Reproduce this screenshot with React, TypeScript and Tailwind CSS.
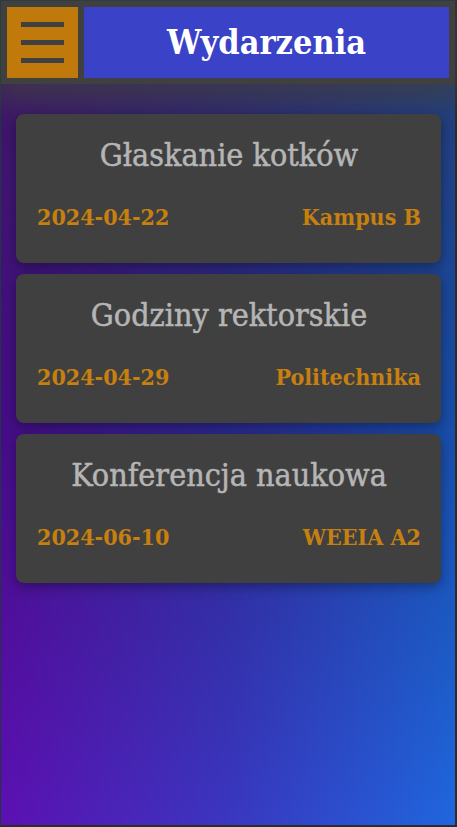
import React from "react";

const events = [
  { title: "Głaskanie kotków", date: "2024-04-22", place: "Kampus B" },
  { title: "Godziny rektorskie", date: "2024-04-29", place: "Politechnika" },
  { title: "Konferencja naukowa", date: "2024-06-10", place: "WEEIA A2" },
];

const slab = "font-['DejaVu_Serif_Condensed','DejaVu_Serif',serif]";

function EventCard({ title, date, place }: { title: string; date: string; place: string }) {
  return (
    <div className="h-[149px] rounded-lg bg-[#404040] pt-[17px] pl-[21px] pr-[20px] shadow-[0_4px_12px_rgba(0,0,0,0.35)]">
      <h2 className="text-center text-[32px] leading-[48px] text-[#b5b5b5] [-webkit-text-stroke:0.5px_#b5b5b5]">
        {title}
      </h2>
      <div className="mt-[22px] flex items-center justify-between text-[23px] leading-[32px] font-semibold text-[#c7800f]">
        <span>{date}</span>
        <span>{place}</span>
      </div>
    </div>
  );
}

export default function App() {
  return (
    <div
      className={`${slab} min-h-[827px] border-l border-r-2 border-t border-b-2 border-l-[#1d3a3c] border-r-[#2c2c2c] border-t-[#243a44] border-b-[#2c2c2c] bg-[linear-gradient(to_bottom,rgba(40,32,48,0.62)_0%,rgba(0,0,0,0.25)_50%,rgba(0,0,0,0)_100%),linear-gradient(to_right,#5c10b2,#3a36c0_50%,#1f66de)]`}
    >
      <header className="flex gap-[6px] bg-[#404040] p-[6px] shadow-[0_6px_30px_10px_rgba(64,64,64,0.75)]">
        <button className="flex h-[71px] w-[71px] shrink-0 flex-col items-center justify-center gap-[13px] bg-[#c07a0c]">
          <span className="block h-[5px] w-[43px] bg-[#404040]" />
          <span className="block h-[5px] w-[43px] bg-[#404040]" />
          <span className="block h-[5px] w-[43px] bg-[#404040]" />
        </button>
        <div className="flex h-[71px] flex-1 items-center justify-center bg-[#3a42c8]">
          <h1 className="text-[34px] font-bold text-white">Wydarzenia</h1>
        </div>
      </header>

      <main className="flex flex-col gap-[11px] px-[15px] pr-[14px] pt-[30px]">
        {events.map((e) => (
          <EventCard key={e.title} {...e} />
        ))}
      </main>
    </div>
  );
}
